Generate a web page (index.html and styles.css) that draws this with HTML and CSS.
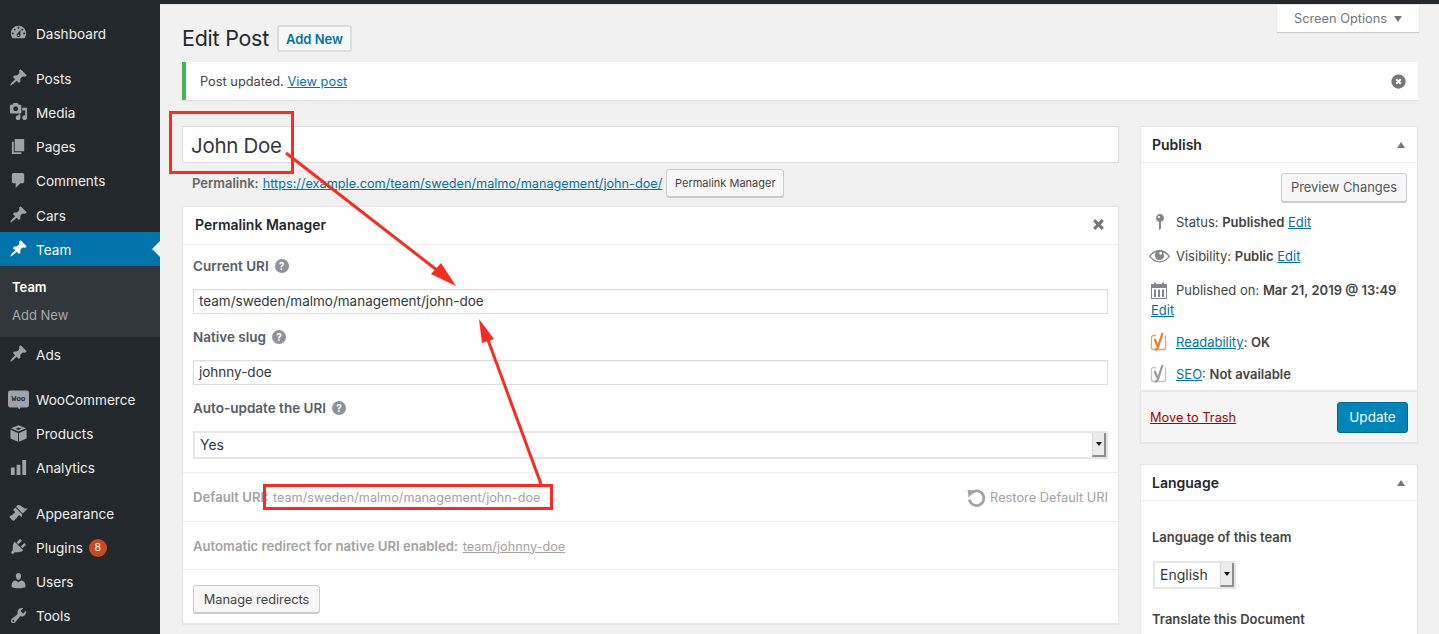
FILE: index.html
```html
<!DOCTYPE html>
<html lang="en">
<head>
<meta charset="utf-8">
<title>Edit Post</title>
<link rel="stylesheet" href="styles.css">
</head>
<body>
<svg class="defs" width="0" height="0" aria-hidden="true">
  <symbol id="i-pin" viewBox="0 0 20 20"><path d="M10.44 3.02l1.82-1.82 6.36 6.35-1.83 1.82c-1.05-.68-2.48-.57-3.41.36l-.75.75c-.92.93-1.04 2.35-.35 3.41l-1.83 1.82-2.41-2.41-2.8 2.79c-.42.42-3.38 2.71-3.8 2.29s1.86-3.39 2.28-3.81l2.79-2.79L4.1 9.36l1.83-1.82c1.05.69 2.48.57 3.4-.36l.75-.75c.93-.92 1.05-2.35.36-3.41z"/></symbol>
</svg>
<div class="topbar"></div>
<div class="shell">
  <nav class="menu">
    <a class="item first"><svg class="ic" viewBox="0 0 20 20"><path d="M3.76 16h12.48c1.1-1.37 1.76-3.11 1.76-5 0-4.42-3.58-8-8-8s-8 3.58-8 8c0 1.89.66 3.63 1.76 5zM10 4c.55 0 1 .45 1 1s-.45 1-1 1-1-.45-1-1 .45-1 1-1zM6 6c.55 0 1 .45 1 1s-.45 1-1 1-1-.45-1-1 .45-1 1-1zm8 0c.55 0 1 .45 1 1s-.45 1-1 1-1-.45-1-1 .45-1 1-1zm-5.37 5.55L12 7v6c0 1.1-.9 2-2 2s-2-.9-2-2c0-.57.24-1.08.63-1.45zM4 10c.55 0 1 .45 1 1s-.45 1-1 1-1-.45-1-1 .45-1 1-1zm12 0c.55 0 1 .45 1 1s-.45 1-1 1-1-.45-1-1 .45-1 1-1zm-5 3c0-.55-.45-1-1-1s-1 .45-1 1 .45 1 1 1 1-.45 1-1z"/></svg>Dashboard</a>
    <a class="item gap"><svg class="ic"><use href="#i-pin"/></svg>Posts</a>
    <a class="item"><svg class="ic" viewBox="0 0 20 20"><path d="M13 11V4c0-.55-.45-1-1-1h-1.67L9 1H5L3.67 3H2c-.55 0-1 .45-1 1v7c0 .55.45 1 1 1h10c.55 0 1-.45 1-1zM7 4.5c1.38 0 2.5 1.12 2.5 2.5S8.38 9.5 7 9.5 4.5 8.38 4.5 7 5.62 4.5 7 4.5zM14 6h5v10.5c0 1.38-1.12 2.5-2.5 2.5S14 17.88 14 16.5s1.12-2.5 2.5-2.5c.17 0 .34.02.5.05V9h-3V6zm-4 8.05V13h2v3.5c0 1.38-1.12 2.5-2.5 2.5S7 17.88 7 16.5 8.12 14 9.5 14c.17 0 .34.02.5.05z"/></svg>Media</a>
    <a class="item"><svg class="ic" viewBox="0 0 20 20"><path d="M6 15V2h10v13H6zm-1 1h8v2H3V5h2v11z"/></svg>Pages</a>
    <a class="item"><svg class="ic" viewBox="0 0 20 20"><path d="M5 2h9c1.1 0 2 .9 2 2v7c0 1.1-.9 2-2 2h-2l-5 5v-5H5c-1.1 0-2-.9-2-2V4c0-1.1.9-2 2-2z"/></svg>Comments</a>
    <a class="item"><svg class="ic"><use href="#i-pin"/></svg>Cars</a>
    <a class="item current"><svg class="ic"><use href="#i-pin"/></svg>Team</a>
    <div class="submenu">
      <a class="sub on">Team</a>
      <a class="sub">Add New</a>
    </div>
    <a class="item"><svg class="ic"><use href="#i-pin"/></svg>Ads</a>
    <a class="item gap"><svg class="ic woo" viewBox="0 0 20 20"><path d="M2 1.500h16a2 2 0 0 1 2 2v12a2 2 0 0 1-2 2h-6l-1.500 2-1-2H2a2 2 0 0 1-2-2v-12a2 2 0 0 1 2-2z"/><text class="wootext" x="10" y="11.500" text-anchor="middle">Woo</text></svg>WooCommerce</a>
    <a class="item"><svg class="ic" viewBox="0 0 20 20"><path d="M10 1.200l8 3.300-8 3.400-8-3.400zM10 3.700L7 5l3 1.200L13 5zM1.500 6l8 3.400v9.400l-8-3.500zM18.500 6v9.300l-8 3.500V9.400z"/></svg>Products</a>
    <a class="item"><svg class="ic" viewBox="0 0 20 20"><path d="M18 18V2h-4v16h4zm-6 0V7H8v11h4zm-6 0v-8H2v8h4z"/></svg>Analytics</a>
    <a class="item gap"><svg class="ic" viewBox="0 0 20 20"><path d="M14.480 11.060L7.410 3.990l1.500-1.500c.5-.56 2.300-.47 3.510.32 1.210.8 1.430 1.280 2.910 2.100 1.180.64 2.450 1.260 4.450.85zm-.71.71L6.700 4.700 4.930 6.470c-.39.39-.39 1.020 0 1.410l1.060 1.060c.39.39.39 1.030 0 1.420-.6.6-1.430 1.110-2.210 1.690-.35.26-.7.53-1.010.84C1.430 13.230.5 14.180.5 14.500c0 .78 3.460 4.240 4.240 4.240.32 0 1.270-.93 2.610-2.270.31-.31.58-.66.84-1.010.58-.78 1.090-1.610 1.690-2.210.39-.39 1.030-.39 1.420 0l1.060 1.060c.39.39 1.020.39 1.410 0z"/></svg>Appearance</a>
    <a class="item"><svg class="ic" viewBox="0 0 20 20"><path d="M13.110 4.360L9.870 7.600 8 5.730l3.240-3.240c.35-.34 1.050-.2 1.560.32.52.51.66 1.210.31 1.550zm-8 1.770l.91-1.120 9.010 9.010-1.190.84c-.71.71-2.630 1.160-3.820 1.160H6.140L4.900 17.260c-.59.59-1.540.59-2.120 0-.59-.58-.59-1.530 0-2.120l1.240-1.240v-3.880c0-1.130.4-3.190 1.090-3.890zm7.260 3.970l3.240-3.240c.34-.35 1.040-.21 1.550.31.52.51.66 1.210.31 1.550l-3.240 3.250z"/></svg>Plugins<span class="count">8</span></a>
    <a class="item"><svg class="ic" viewBox="0 0 20 20"><path d="M10 9.250c-2.270 0-2.730-3.440-2.730-3.440C7 4.020 7.820 2 9.970 2c2.160 0 2.980 2.020 2.710 3.810 0 0-.41 3.440-2.680 3.440zm0 2.570L12.720 10c2.390 0 4.520 2.330 4.520 4.530v2.490s-3.650 1.130-7.240 1.130c-3.650 0-7.240-1.130-7.240-1.130v-2.490c0-2.250 1.940-4.480 4.470-4.480z"/></svg>Users</a>
    <a class="item"><svg class="ic" viewBox="0 0 20 20"><path d="M16.680 9.770c-1.340 1.340-3.300 1.670-4.950.99l-5.410 6.520c-.99.99-2.590.99-3.580 0s-.99-2.590 0-3.570l6.520-5.420c-.68-1.650-.35-3.610.99-4.950 1.280-1.280 3.120-1.620 4.720-1.060l-2.890 2.890 2.820 2.820 2.860-2.870c.53 1.580.18 3.390-1.080 4.650zM3.810 16.210c.4.39 1.040.39 1.430 0 .4-.4.4-1.040 0-1.430-.39-.4-1.030-.4-1.430 0-.39.39-.39 1.030 0 1.430z"/></svg>Tools</a>
  </nav>

  <main class="content">
    <div class="screen-tab">Screen Options<span class="caret-down"></span></div>
    <header class="head">
      <h1>Edit Post</h1>
      <a class="btn btn-add">Add New</a>
    </header>
    <div class="notice">
      <p>Post updated. <a class="link">View post</a></p>
      <svg class="notice-x" viewBox="0 0 20 20"><path fill-rule="evenodd" d="M10 2.500a7.500 7.500 0 1 1 0 15 7.500 7.500 0 0 1 0-15zM6.800 8.300L8.500 10l-1.700 1.700 1.500 1.500 1.700-1.700 1.700 1.700 1.500-1.500-1.700-1.700 1.700-1.700-1.500-1.500-1.700 1.700-1.700-1.700z"/></svg>
    </div>

    <div class="columns">
      <section class="col-main">
        <div class="title-input">John Doe</div>
        <div class="permalink">
          <b>Permalink:</b>
          <a class="link">https://example.com/team/sweden/malmo/management/john-doe/</a>
          <a class="btn btn-small">Permalink Manager</a>
        </div>
        <div class="box">
          <div class="box-head pm-head">
            <h2>Permalink Manager</h2>
            <svg class="close-x" viewBox="0 0 12 12"><path d="M1 3l2-2 3 3 3-3 2 2-3 3 3 3-2 2-3-3-3 3-2-2 3-3z"/></svg>
          </div>
          <div class="fields">
            <label class="field-label">Current URI<span class="help">?</span></label>
            <div class="input">team/sweden/malmo/management/john-doe</div>
            <label class="field-label">Native slug<span class="help">?</span></label>
            <div class="input">johnny-doe</div>
            <label class="field-label">Auto-update the URI<span class="help">?</span></label>
            <div class="select wide"><span>Yes</span><i class="select-btn"></i></div>
          </div>
          <div class="row row-default">
            <span class="muted"><b>Default URI:</b> team/sweden/malmo/management/john-doe</span>
            <span class="restore"><svg class="restore-ic" viewBox="0 0 20 20"><path class="restore-arc" d="M5.200 5.600A7 7 0 1 1 3.200 12"/><path class="restore-head" d="M1.500 2.500L9 3.500 2.500 10z"/></svg>Restore Default URI</span>
          </div>
          <div class="row row-redirect">
            <span class="muted"><b>Automatic redirect for native URI enabled:</b> <a class="muted-link">team/johnny-doe</a></span>
          </div>
          <div class="row-last"><a class="btn btn-manage">Manage redirects</a></div>
        </div>
      </section>

      <aside class="col-side">
        <div class="box publish">
          <div class="box-head side-head"><h2>Publish</h2><span class="caret-up"></span></div>
          <div class="preview-row"><a class="btn btn-preview">Preview Changes</a></div>
          <div class="misc">
            <svg class="mi mi-pin" viewBox="0 0 20 20"><path d="M14 6c0 1.860-1.280 3.410-3 3.860V16c0 1-2 2-2 2V9.860c-1.720-.45-3-2-3-3.860 0-2.210 1.790-4 4-4s4 1.790 4 4zM8 5c0 .55.45 1 1 1s1-.45 1-1-.45-1-1-1-1 .45-1 1z"/></svg>
            <span>Status: <b>Published</b> <a class="link">Edit</a></span>
          </div>
          <div class="misc">
            <svg class="mi mi-eye" viewBox="0 0 20 20"><path d="M18.300 9.500C15 4.900 8.500 3.800 3.900 7.200c-1.200.9-2.200 2.100-3 3.400.2.4.5.8.8 1.200 3.300 4.600 9.600 5.600 14.200 2.400.9-.7 1.700-1.400 2.400-2.400.3-.4.5-.8.8-1.200-.3-.5-.5-.8-.8-1.100zm-8.200-2.300c.5-.5 1.300-.5 1.800 0s.5 1.300 0 1.800-1.300.5-1.800 0-.5-1.300 0-1.800zm-.1 7.700c-3.100 0-6-1.600-7.700-4.200C3.500 9 5.100 7.800 7 7.200c-.7.8-1 1.700-1 2.700 0 2.200 1.700 4.100 4 4.100 2.200 0 4.100-1.700 4.100-4 0-1-.4-2-1.100-2.700 1.900.6 3.500 1.800 4.700 3.500-1.700 2.600-4.600 4.200-7.700 4.200z"/></svg>
            <span>Visibility: <b>Public</b> <a class="link">Edit</a></span>
          </div>
          <div class="misc misc-date">
            <svg class="mi" viewBox="0 0 20 20"><path fill-rule="evenodd" d="M2 4h3V2.500h2V4h6V2.500h2V4h3v15H2zM3 8v10h14V8zM5 9.500h2V17H5zM9 9.500h2V17H9zM13 9.500h2V17h-2z"/></svg>
            <span>Published on: <b>Mar 21, 2019 @ 13:49</b></span>
            <a class="link edit-date">Edit</a>
          </div>
          <div class="misc seo seo-first">
            <svg class="yo" viewBox="0 0 18 20"><path class="yo-box yo-orange" d="M6 3.500H3.500a2 2 0 0 0-2 2v10a2 2 0 0 0 2 2h10a2 2 0 0 0 2-2v-12"/><path class="yo-y yo-orange-y" d="M4.500 7l3.500 8c-.4 1.600-1.300 2.600-3 3M12.500 1L8 15"/></svg>
            <span><a class="link">Readability</a>: <b>OK</b></span>
          </div>
          <div class="misc seo">
            <svg class="yo" viewBox="0 0 18 20"><path class="yo-box yo-grey" d="M6 3.500H3.500a2 2 0 0 0-2 2v10a2 2 0 0 0 2 2h10a2 2 0 0 0 2-2v-12"/><path class="yo-y yo-grey-y" d="M4.500 7l3.500 8c-.4 1.600-1.300 2.600-3 3M12.500 1L8 15"/></svg>
            <span><a class="link">SEO</a>: <b>Not available</b></span>
          </div>
          <div class="major">
            <a class="trash">Move to Trash</a>
            <a class="btn-primary">Update</a>
          </div>
        </div>
        <div class="box language">
          <div class="box-head side-head"><h2>Language</h2><span class="caret-up"></span></div>
          <div class="lang-body">
            <div class="lang-label">Language of this team</div>
            <div class="select small"><span>English</span><i class="select-btn"></i></div>
            <div class="lang-label translate">Translate this Document</div>
          </div>
        </div>
      </aside>
    </div>
  </main>
</div>

<div class="mark mark-title"></div>
<div class="mark mark-default"></div>
<svg class="arrows" viewBox="0 0 1439 634">
  <path class="arrow-line" d="M286 153L442 274"/>
  <path class="arrow-head" d="M456 286L431 274 441 263z"/>
  <path class="arrow-line" d="M541 484L488 340"/>
  <path class="arrow-head" d="M479 319L482 343 494 339z"/>
</svg>
</body>
</html>
```
FILE: styles.css
```css
* { box-sizing: border-box; }
html, body { margin: 0; height: 634px; overflow: hidden; }
body {
  background: #f1f1f1;
  color: #444;
  font-family: Inter, "Liberation Sans", Arial, sans-serif;
  font-size: 12.800px;
  position: relative;
}
h1, h2, p { margin: 0; font-weight: normal; }
.defs { position: absolute; }
.topbar { height: 4px; background: #23282d; }
.shell { display: flex; height: 630px; }

/* Admin menu */
.menu { width: 160px; flex: none; background: #23282d; padding-top: 12px; }
.item {
  display: flex; align-items: center; position: relative;
  height: 34.200px; padding: 1px 0 0 36px;
  color: #eee; font-size: 13.600px; white-space: nowrap;
}
.item .ic {
  position: absolute; left: 9px; top: 7px;
  width: 19px; height: 19px; fill: #9ea3a8;
}
.item .woo { left: 8px; top: 6px; width: 21px; height: 21px; }
.item.gap { margin-top: 11px; }
.item.current { background: #0073aa; color: #fff; }
.item.current .ic { fill: #fff; }
.item.current::after {
  content: ""; position: absolute; right: 0; top: 50%; margin-top: -8px;
  border: 8px solid transparent; border-right-color: #f1f1f1; border-left: 0;
}
.submenu { background: #32373c; height: 71px; padding-top: 7px; }
.sub { display: block; height: 28px; line-height: 28px; padding-left: 12px; font-size: 13px; color: #a5a9ad; }
.sub.on { color: #fff; font-weight: 600; }
.wootext { font: 700 7.500px "Liberation Mono", monospace; fill: #23282d; }
.count {
  width: 18px; height: 18px; margin-left: 6px; border-radius: 50%;
  background: #ca4a1f; color: #fff; font-size: 10.500px;
  display: flex; align-items: center; justify-content: center;
}

/* Content */
.content { flex: 1; min-width: 0; padding: 0 21px 0 22px; position: relative; border-top: 1px solid #e4e4e4; }
.screen-tab {
  position: absolute; right: 20px; top: 0; width: 142px; height: 27px;
  background: #fff; box-shadow: 0 1px 1px rgba(0,0,0,.15);
  color: #72777c; font-size: 12.800px;
  display: flex; align-items: center; justify-content: center;
}
.caret-down { margin-left: 7px; border: 4px solid transparent; border-top: 6px solid #72777c; border-bottom: 0; }
.head { display: flex; align-items: center; height: 57px; padding-top: 9px; }
.head h1 { font-size: 21.400px; color: #23282d; letter-spacing: -.2px; }
.btn {
  display: inline-flex; align-items: center; justify-content: center;
  background: #f7f7f7; border: 1px solid #ccc; border-radius: 3px;
  box-shadow: 0 1px 0 #ccc; color: #555; white-space: nowrap;
}
.btn-add {
  width: 75px; height: 27px; margin-left: 8px; padding-top: 1px;
  border-width: 2px; border-color: #ddd; box-shadow: none;
  color: #0073aa; font-weight: 600; font-size: 13px;
}
.notice {
  height: 38px; background: #fff;
  border-left: 4px solid #46b450; box-shadow: 0 1px 1px rgba(0,0,0,.08);
  display: flex; align-items: center; justify-content: space-between;
  padding: 0 10px 0 14px;
}
.notice-x { width: 19px; height: 19px; fill: #72777c; }
.link { color: #0073aa; text-decoration: underline; }
.columns { display: flex; gap: 21px; margin-top: 26px; }
.col-main { width: 937px; flex: none; }
.col-side { width: 278px; flex: none; }
.title-input {
  height: 37px; background: #fff; border: 1px solid #ddd;
  font-size: 20.500px; color: #32373c; padding: 1px 8px 0;
  display: flex; align-items: center; letter-spacing: -.3px;
}
.permalink {
  display: flex; align-items: center; height: 43px; padding: 0 0 3px 10px;
  color: #666; font-size: 12.700px; white-space: nowrap;
}
.permalink b { font-weight: 600; font-size: 13px; margin-right: 4px; }
.btn-small { width: 118px; height: 28px; margin-left: 4px; font-size: 11px; color: #444; }
.box { background: #fff; border: 1px solid #e5e5e5; box-shadow: 0 1px 1px rgba(0,0,0,.04); }
.box-head { display: flex; align-items: center; justify-content: space-between; border-bottom: 1px solid #eee; }
.box-head h2 { font-size: 14px; font-weight: 600; color: #23282d; }
.pm-head { height: 38px; padding: 0 13px 3px 12px; }
.close-x { width: 13px; height: 13px; fill: #72777c; }
.fields { padding: 0 10px 13px; }
.field-label {
  display: flex; align-items: center; height: 46px;
  font-weight: 600; font-size: 13.500px; color: #555d66;
}
.fields .field-label:first-child { height: 44px; padding-bottom: 2px; }
.help {
  width: 14px; height: 14px; margin-left: 6px; border-radius: 50%;
  background: #8f9398; color: #fff; font-size: 10px; font-weight: 700;
  display: flex; align-items: center; justify-content: center;
}
.input {
  height: 25px; background: #fff; border: 1px solid #ddd;
  box-shadow: inset 0 1px 1px #f2f2f2; color: #32373c;
  padding: 0 5px 1px; display: flex; align-items: center; font-size: 13.500px;
}
.select {
  background: #fff; border: 2px solid #e6e6e6; height: 28px;
  display: flex; align-items: center; justify-content: space-between;
  color: #32373c; font-size: 14px;
}
.select span { padding: 0 0 1px 5px; }
.select-btn {
  width: 14px; height: 100%; flex: none; position: relative;
  background: #ececec; border-right: 2px solid #8d8d8d; border-bottom: 2px solid #8d8d8d;
  border-left: 1px solid #d5d5d5;
}
.select-btn::after {
  content: ""; position: absolute; left: 3px; top: 9px;
  border: 3px solid transparent; border-top: 4px solid #111; border-bottom: 0;
}
.row { display: flex; align-items: center; justify-content: space-between; padding: 0 10px; border-top: 1px solid #eee; color: #a3a3a3; font-size: 12.700px; }
.row-default { height: 49px; }
.row-redirect { height: 48px; }
.muted b { font-weight: 600; font-size: 13.150px; color: #a3a3a3; margin-right: 1px; }
.muted-link { color: #a3a3a3; text-decoration: underline; }
.restore { display: flex; align-items: center; gap: 3px; font-size: 12.800px; }
.restore-ic { width: 21px; height: 21px; }
.restore-arc { fill: none; stroke: #a3a3a3; stroke-width: 2.600; }
.restore-head { fill: #a3a3a3; }
.row-last { border-top: 1px solid #eee; height: 54px; padding: 15px 10px 0; }
.btn-manage { width: 127px; height: 28px; font-size: 12.800px; color: #444; }
.publish { height: 317px; position: relative; }
.side-head { height: 36px; padding: 0 12px 0 11px; }
.caret-up { border: 4px solid transparent; border-bottom: 6px solid #72777c; border-top: 0; }
.preview-row { display: flex; justify-content: flex-end; padding: 10px 10px 0; }
.btn-preview { width: 126px; height: 29px; font-size: 12.900px; }
.misc { position: relative; height: 34px; padding: 0 0 0 35px; display: flex; align-items: center; flex-wrap: wrap; font-size: 13px; color: #444; }
.misc b { font-weight: 600; }
.preview-row + .misc { margin-top: 3px; }
.mi { position: absolute; left: 8px; top: 7px; width: 20px; height: 20px; fill: #82878c; }
.mi-pin { left: 9px; }
.mi-eye { left: 7px; top: 5px; width: 23px; height: 23px; }
.misc-date { display: block; height: 53px; padding-top: 7px; padding-left: 10px; line-height: 20px; }
.misc-date span { margin-left: 25px; }
.edit-date { display: block; }
.seo { height: 32px; }
.seo .yo { position: absolute; left: 9px; top: 6px; width: 18px; height: 20px; fill: none; }
.yo-box { stroke-width: 1.300; }
.yo-y { stroke-width: 2.200; }
.yo-orange { stroke: #f5a05b; }
.yo-orange-y { stroke: #ee7c1b; }
.yo-grey { stroke: #c3c3c3; }
.yo-grey-y { stroke: #9a9a9a; }
.major {
  position: absolute; left: 0; right: 0; bottom: 0; height: 52px;
  background: #f5f5f5; border-top: 2px solid #e8e8e8;
  display: flex; align-items: center; justify-content: space-between; padding: 0 9px;
}
.trash { color: #a00; text-decoration: underline; font-size: 12.800px; }
.btn-primary {
  width: 71px; height: 31px; border-radius: 3px; background: #0085ba;
  border: 1px solid #006799; color: #fff; font-size: 13.500px;
  display: flex; align-items: center; justify-content: center;
}
.language { margin-top: 21px; height: 200px; }
.lang-body { padding: 28px 11px 0; }
.lang-label { font-weight: 600; font-size: 13px; color: #444; }
.select.small { width: 83px; height: 28px; margin: 16px 0 0 1px; }
.translate { margin-top: 22px; }

/* Red annotations drawn on top of the screenshot */
.mark { position: absolute; border: 3px solid #fb2b20; }
.mark-title { left: 169px; top: 111px; width: 125px; height: 63px; }
.mark-default { left: 263px; top: 484px; width: 290px; height: 26px; }
.arrows { position: absolute; left: 0; top: 0; width: 1439px; height: 634px; pointer-events: none; }
.arrow-line { stroke: #fb2b20; stroke-width: 3; fill: none; }
.arrow-head { fill: #fb2b20; }
```
